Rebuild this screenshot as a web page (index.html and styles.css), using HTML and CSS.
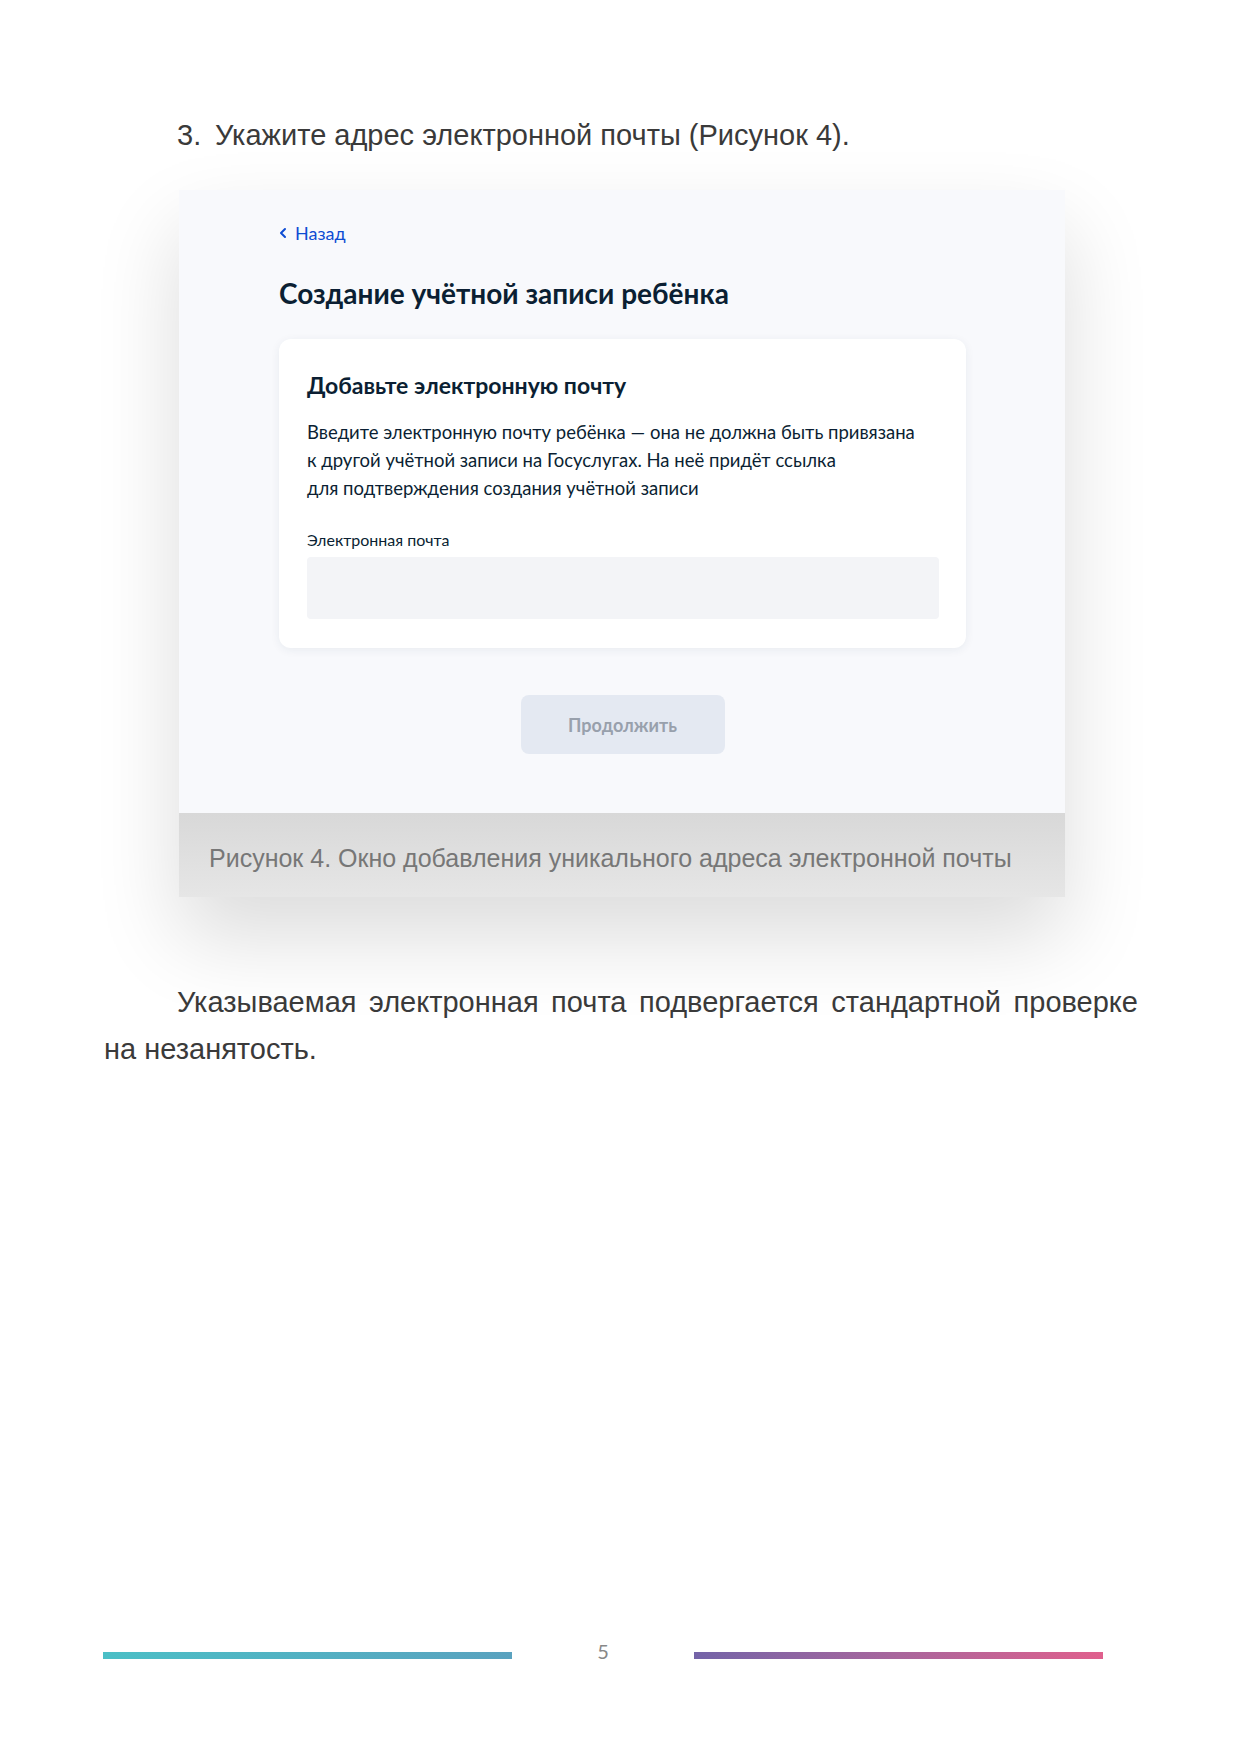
FILE: index.html
```html
<!DOCTYPE html>
<html lang="ru">
<head>
    <meta charset="UTF-8">
    <title>Создание учётной записи ребёнка</title>
    <link rel="stylesheet" href="styles.css">
</head>
<body>
    <div class="page">
        <p class="step"><span class="step-num">3.</span>Укажите адрес электронной почты (Рисунок 4).</p>

        <div class="figure">
            <div class="shot">
                <a class="back" href="#">
                    <svg width="8" height="12" viewBox="0 0 8 12"><polyline points="6,2 2,6 6,10" fill="none" stroke="#0d4cd3" stroke-width="2" stroke-linecap="round" stroke-linejoin="round"/></svg>
                    Назад
                </a>
                <h1>Создание учётной записи ребёнка</h1>
                <div class="card">
                    <h2>Добавьте электронную почту</h2>
                    <p class="hint">Введите электронную почту ребёнка — она не должна быть привязана<br>к другой учётной записи на Госуслугах. На неё придёт ссылка<br>для подтверждения создания учётной записи</p>
                    <label class="field-label" for="email">Электронная почта</label>
                    <input class="field" type="text" id="email">
                </div>
                <div class="actions">
                    <button class="btn" disabled>Продолжить</button>
                </div>
            </div>
            <div class="caption">Рисунок 4. Окно добавления уникального адреса электронной почты</div>
        </div>

        <p class="text">Указываемая электронная почта подвергается стандартной проверке на незанятость.</p>

        <div class="footer">
            <div class="bar bar-left"></div>
            <span class="page-num">5</span>
            <div class="bar bar-right"></div>
        </div>
    </div>
</body>
</html>
```

FILE: styles.css
```css
body {
    margin: 0;
    background: #fff;
    font-family: "Liberation Sans", Arial, sans-serif;
    color: #3a3a3a;
}

.page {
    min-height: 1755px;
    display: flex;
    flex-direction: column;
    box-sizing: border-box;
}

.step {
    margin: 116px 0 0 177px;
    font-size: 29px;
    line-height: 38px;
}

.step-num {
    display: inline-block;
    width: 38px;
}

/* figure: screenshot + caption with soft shadow */
.figure {
    margin: 36px 0 0 179px;
    width: 886px;
    box-shadow: 0 40px 80px rgba(0, 0, 0, 0.14);
}

.shot {
    background: #f8f9fc;
    padding: 31px 99px 59px 100px;
    font-family: Lato, "Noto Sans", sans-serif;
    color: #0b1f33;
}

.back {
    display: flex;
    align-items: center;
    gap: 8px;
    height: 24px;
    font-size: 18px;
    color: #0d4cd3;
    text-decoration: none;
}

h1 {
    margin: 32px 0 30px;
    font-size: 28px;
    line-height: 32px;
    font-weight: 700;
}

.card {
    background: #fff;
    border-radius: 12px;
    padding: 32px 27px 29px 28px;
    box-shadow: 0 2px 10px rgba(30, 50, 90, 0.07);
    display: flex;
    flex-direction: column;
}

h2 {
    margin: 0;
    font-size: 23px;
    line-height: 28px;
    font-weight: 700;
}

.hint {
    margin: 19px 0 0;
    font-size: 18.5px;
    line-height: 28px;
}

.field-label {
    margin-top: 28px;
    font-size: 16px;
    line-height: 20px;
}

.field {
    margin-top: 7px;
    height: 60px;
    border: none;
    border-radius: 4px;
    background: #f3f4f7;
}

.actions {
    display: flex;
    justify-content: center;
    margin-top: 47px;
}

.btn {
    width: 204px;
    height: 59px;
    border: none;
    border-radius: 8px;
    background: #e4e9f2;
    color: #98a0ac;
    font-family: Lato, "Noto Sans", sans-serif;
    font-size: 18px;
    font-weight: 700;
}

.caption {
    background: linear-gradient(#d8d8d8, #e6e6e6);
    padding: 30px 20px 24px 30px;
    font-size: 25px;
    line-height: 30px;
    color: #777;
}

.text {
    margin: 82px 103px 0 104px;
    font-size: 29px;
    line-height: 47px;
    text-indent: 73px;
    text-align: justify;
}

.footer {
    margin-top: auto;
    padding: 0 138px 92px 103px;
    display: flex;
    justify-content: space-between;
    align-items: center;
}

.bar {
    width: 409px;
    height: 7px;
}

.bar-left {
    background: linear-gradient(to right, #4bbfc6, #5aa2bf);
}

.bar-right {
    background: linear-gradient(to right, #7464a8, #a9669c, #e0608d);
}

.page-num {
    font-family: Lato, sans-serif;
    font-size: 20px;
    color: #888;
    margin-top: -8px;
}
```
